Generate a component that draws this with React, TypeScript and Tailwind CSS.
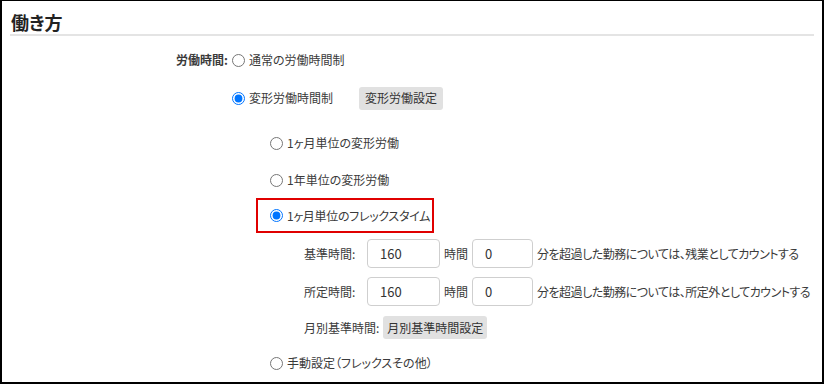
import React from "react";

const font = "font-['Meiryo','Noto_Sans_CJK_JP',sans-serif] [font-feature-settings:'palt']";

function Radio({ checked = false, name }: { checked?: boolean; name: string }) {
  return (
    <input
      type="radio"
      name={name}
      defaultChecked={checked}
      className="m-0 h-[13px] w-[13px] shrink-0 accent-[#0075ff]"
    />
  );
}

function NumField({ value, w }: { value: string; w: string }) {
  return (
    <input
      type="text"
      defaultValue={value}
      className={`h-[29px] ${w} shrink-0 rounded-[4px] border border-[#cfcfcf] bg-white px-[12px] text-[13px] text-[#333] outline-none`}
    />
  );
}

export default function App() {
  return (
    <div
      className={`${font} h-[384px] w-[824px] overflow-hidden whitespace-nowrap border-t border-r-2 border-b-2 border-l-2 border-black bg-white text-[12px] text-[#3a3a3a]`}
    >
      {/* 見出し */}
      <div className="flex h-[33px] items-end px-[9px] pb-[3px]">
        <h2 className="text-[18px] font-bold leading-none text-[#222]">働き方</h2>
      </div>
      <div className="mx-[8px] h-[2px] bg-[#e4e4e4]" />

      <div className="mt-[12px] flex">
        <div className="w-[228px] shrink-0 pr-[2px] text-right">
          <span className="inline-flex h-[24px] items-center font-bold">労働時間:</span>
        </div>

        <div className="flex flex-col">
          <label className="flex h-[24px] items-center gap-[4px] pl-[2px]">
            <Radio name="kind" />
            <span>通常の労働時間制</span>
          </label>

          <div className="mt-[14px] flex h-[24px] items-center pl-[2px]">
            <label className="flex items-center gap-[4px]">
              <Radio name="kind" checked />
              <span>変形労働時間制</span>
            </label>
            <button className="ml-[26px] h-[23px] rounded-[3px] bg-[#e1e1e1] px-[6px] text-[12px] text-[#333]">
              変形労働設定
            </button>
          </div>

          {/* 変形労働の種類 */}
          <div className="ml-[26px] flex flex-col">
            <label className="mt-[21px] flex h-[24px] items-center gap-[4px] pl-[14px]">
              <Radio name="sub" />
              <span>1ヶ月単位の変形労働</span>
            </label>
            <label className="mt-[13px] flex h-[24px] items-center gap-[4px] pl-[14px]">
              <Radio name="sub" />
              <span>1年単位の変形労働</span>
            </label>

            <label className="mt-[6px] flex h-[35px] w-[178px] items-center gap-[4px] border-2 border-[#e00000] pl-[12px]">
              <Radio name="sub" checked />
              <span className="tracking-[-0.3px]">1ヶ月単位のフレックスタイム</span>
            </label>

            <div className="flex flex-col pl-[48px]">
              <div className="mt-[6px] flex items-center">
                <span className="w-[63px] shrink-0">基準時間:</span>
                <NumField value="160" w="w-[73px]" />
                <span className="mx-[4px] shrink-0">時間</span>
                <NumField value="0" w="w-[61px]" />
                <span className="ml-[4px] tracking-[-0.5px]">分を超過した勤務については、残業としてカウントする</span>
              </div>
              <div className="mt-[9px] flex items-center">
                <span className="w-[63px] shrink-0">所定時間:</span>
                <NumField value="160" w="w-[73px]" />
                <span className="mx-[4px] shrink-0">時間</span>
                <NumField value="0" w="w-[61px]" />
                <span className="ml-[4px] tracking-[-0.5px]">分を超過した勤務については、所定外としてカウントする</span>
              </div>
              <div className="mt-[10px] flex items-center">
                <span className="mr-[4px]">月別基準時間:</span>
                <button className="h-[23px] rounded-[3px] bg-[#e1e1e1] px-[4px] text-[12px] text-[#333]">
                  月別基準時間設定
                </button>
              </div>
            </div>

            <label className="mt-[12px] flex h-[24px] items-center gap-[4px] pl-[14px]">
              <Radio name="sub" />
              <span>手動設定（フレックスその他）</span>
            </label>
          </div>
        </div>
      </div>
    </div>
  );
}
